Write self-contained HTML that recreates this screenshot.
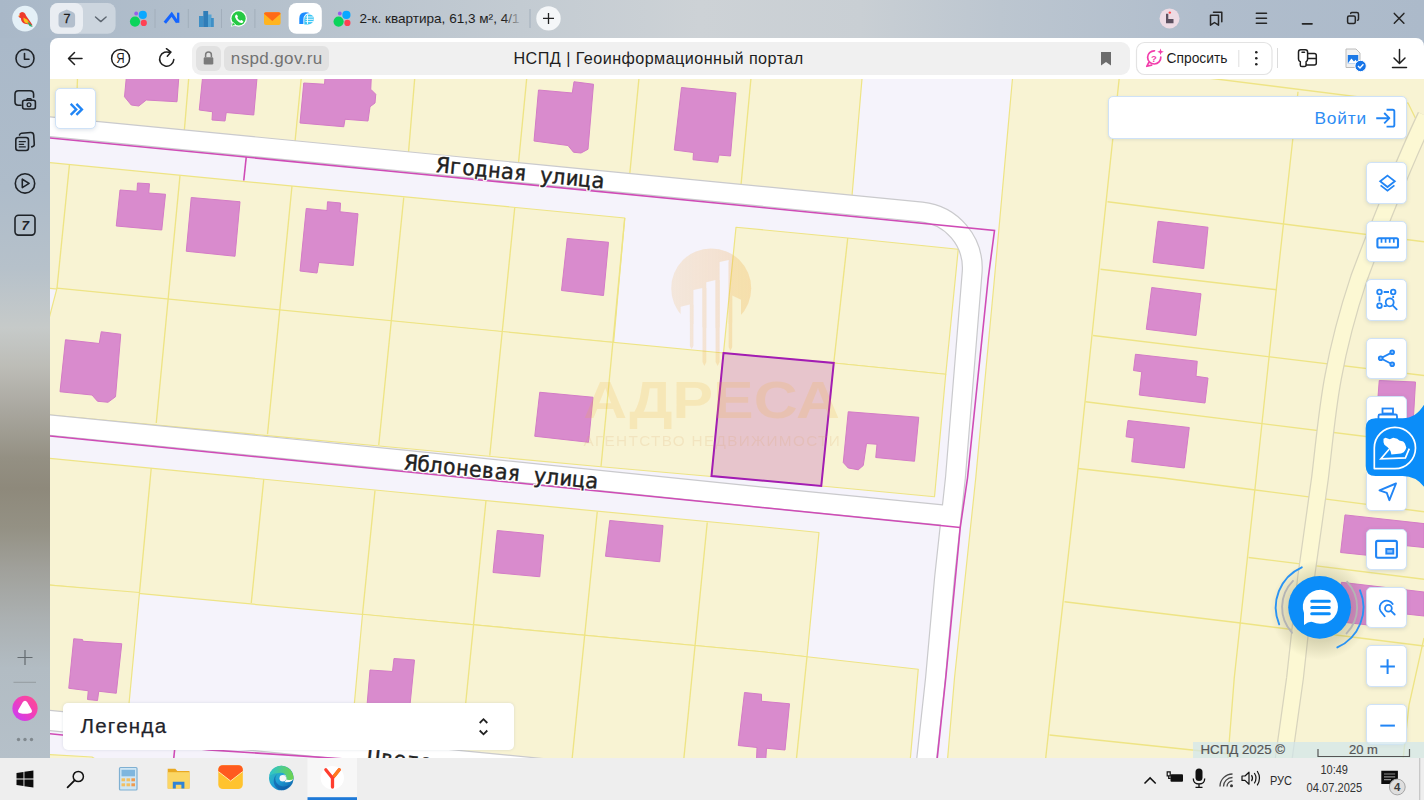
<!DOCTYPE html>
<html lang="ru">
<head>
<meta charset="utf-8">
<title>НСПД | Геоинформационный портал</title>
<style>
*{box-sizing:border-box;margin:0;padding:0}
html,body{width:1424px;height:800px;overflow:hidden}
body{position:relative;font-family:"Liberation Sans",sans-serif;background:#b3bfcb;color:#222}
.abs{position:absolute}
#frame{left:0;top:0;width:1424px;height:758px;
 background:
  linear-gradient(90deg,#a9b8c8 0,#b4c0cc 250px,#c3cbd2 520px,#cdd2d6 700px,#c9cfd4 860px,#bcc6d0 1000px,#b0bdcc 1200px,#acbaca 1424px);}
#side{left:0;top:38px;width:50px;height:720px;
 background:linear-gradient(180deg,#aab9c9 0,#aebcca 150px,#b6c1ca 230px,#c6cac9 290px,#bcbcb6 330px,#aaa8a0 370px,#949083 420px,#8e897b 450px,#949184 490px,#a0a09a 530px,#abb0b1 580px,#b2bcc3 630px,#b5c0c9 720px);}
#toolbar{left:50px;top:38px;width:1374px;height:41px;background:#fff;border-radius:8px 8px 0 0}
#omni{left:192px;top:42px;width:938px;height:33px;background:#f0f0f0;border-radius:9px}
.pill{top:46px;height:25px;background:#e1e1e1;border-radius:6px}
#title{left:192px;top:42px;width:938px;height:33px;line-height:33px;font-size:16.200px;color:#1d1d1d;text-align:center;padding-left:0;letter-spacing:.43px}
#title span{position:absolute;left:321.500px;top:0;white-space:nowrap}
#map{left:50px;top:79px;width:1374px;height:679px;overflow:hidden;background:#f8f3d3}
.mapsvg{position:absolute;left:0;top:-1px}
.btn{position:absolute;left:1315.5px;width:41.5px;height:41.5px;background:#fff;border:1px solid #cfe2f7;border-radius:5px;box-shadow:0 1px 4px rgba(60,90,130,.18)}
.btn svg{position:absolute;left:0;top:0}
#login{left:1057.5px;top:17px;width:299.5px;height:42.800px;background:#fff;border:1px solid #cfe2f7;border-radius:5px;box-shadow:0 1px 3px rgba(60,90,130,.12)}
#login span{position:absolute;left:206px;top:10.500px;font-size:17.300px;color:#2d8cf3;letter-spacing:.8px}
#legend{left:13px;top:623.5px;width:451px;height:47px;background:#fff;border-radius:5px;box-shadow:0 0 3px rgba(90,110,140,.18)}
#legend span{position:absolute;left:17.400px;top:11px;font-size:20.500px;line-height:23px;color:#1f232b;letter-spacing:1.300px;-webkit-text-stroke:.25px #1f232b}
#attr{left:1142.5px;top:662.5px;width:232px;height:17px;background:rgba(208,230,237,.7)}
#attr span{position:absolute;top:.5px;font-size:13.300px;color:#555;white-space:nowrap;-webkit-text-stroke:.2px #555}
#taskbar{left:0;top:758px;width:1424px;height:42px;background:#eeeeee}
.tb{position:absolute;font-size:12px;color:#111;white-space:nowrap}
</style>
</head>
<body>
<div id="frame" class="abs"></div>
<div id="side" class="abs"></div>

<!-- ======= tab strip ======= -->
<svg class="abs" style="left:0;top:0" width="1424" height="38" viewBox="0 0 1424 38">
  <!-- profile avatar -->
  <circle cx="25" cy="18.6" r="12.8" fill="#e4f0f7"/>
  <path d="M19.5,13.5 q2,-2.6 4.4,-.9 q1.5,1 2.2,3.2 l4.6,6.4 l2,3.2 l-3.6,-.9 l-4.2,-.7 q-3.8,-1.2 -4,-5.6 q-1.6,-.6 -2.6,-1.8 q.5,-.4 1.200,-.5z" fill="#ee3a2c"/>
  <path d="M23.500,17.500 l3.800,2.200 l2.800,4.200 l-4.400,-.9 q-2.600,-1.800 -2.200,-5.500z" fill="#f6c21c"/>
  <path d="M27.300,21.600 l3.400,2.300 l2,3 l-3.200,-.8z" fill="#2aa86a"/>
  <path d="M18.300,15.300 l1.500,-.2 l-.3,1.300z" fill="#f5b21a"/>
  <!-- tab group pill -->
  <rect x="50" y="3" width="65.600" height="30.800" rx="8" fill="#ccd5de"/>
  <rect x="50" y="3" width="33" height="30.800" rx="8" fill="#e9edf2"/>
  <path d="M61.500,11.800 l5.300,-2.400 l5.300,2.400 q3,1.200 3,4 v8.200 q0,3.400 -3.400,3.400 h-9.800 q-3.400,0 -3.400,-3.400 v-8.200 q0,-2.800 3,-4z" fill="#b3bfcd"/>
  <text x="66.900" y="23.400" font-size="12.500" font-family="'Liberation Sans',sans-serif" fill="#1c1c1c" text-anchor="middle" stroke="#1c1c1c" stroke-width=".3">7</text>
  <path d="M95.500,17 l5.300,4.600 l5.300,-4.600" fill="none" stroke="#5d6670" stroke-width="1.400" stroke-linecap="round" stroke-linejoin="round"/>
  <!-- avito -->
  <g>
    <circle cx="135" cy="21.600" r="5.100" fill="#0ad45a"/>
    <circle cx="142.800" cy="14.900" r="4.100" fill="#0aa8ff"/>
    <circle cx="143.800" cy="22.900" r="3.100" fill="#ff4053"/>
    <circle cx="136.200" cy="13.500" r="1.900" fill="#965eeb"/>
  </g>
  <g stroke="#a2aebb" stroke-width="1">
    <line x1="155" y1="9" x2="155" y2="28"/>
    <line x1="188.300" y1="9" x2="188.300" y2="28"/>
    <line x1="221.500" y1="9" x2="221.500" y2="28"/>
    <line x1="254.900" y1="9" x2="254.900" y2="28"/>
    <line x1="530" y1="9" x2="530" y2="28"/>
  </g>
  <!-- blue N -->
  <path d="M164.800,22.800 L171.700,14.300 L177.300,22.300" fill="none" stroke="#1565ff" stroke-width="3.100" stroke-linejoin="miter"/><path d="M178.200,12.700 V22.800" stroke="#1565ff" stroke-width="2.300"/>
  <!-- buildings -->
  <g fill="#3f8fc6">
    <rect x="199" y="16" width="4.500" height="11"/>
    <rect x="203.300" y="11" width="4.800" height="16" fill="#2f7db8"/>
    <rect x="208" y="14.500" width="3.500" height="12.500" fill="#56a4d4"/>
    <rect x="211" y="18" width="2.800" height="9"/>
  </g>
  <!-- whatsapp -->
  <circle cx="238.600" cy="18.400" r="8.300" fill="#fff"/>
  <circle cx="238.600" cy="18.400" r="7.100" fill="#26c943"/>
  <path d="M231.300,26.400 l1.400,-4.400 l3,2.900z" fill="#26c943" stroke="#fff" stroke-width=".8"/>
  <path d="M235.600,15 q.9,-1.200 1.700,.2 l.6,1.300 q.2,.6 -.6,1.200 q.9,2 3,3 q.7,-.9 1.300,-.6 l1.400,.8 q.9,.6 -.2,1.600 q-1.400,1.100 -3.700,-.2 q-2.900,-1.700 -3.900,-4.700 q-.5,-1.500 .4,-2.600z" fill="#fff"/>
  <!-- mail -->
  <rect x="264" y="12.300" width="16.600" height="12.800" rx="2" fill="#ffb41f"/>
  <path d="M264,13.800 q0,-1.500 1.800,-1.500 h13 q1.800,0 1.800,1.500 l-8.300,7.200z" fill="#ff6a17"/>
  <!-- active tab -->
  <rect x="288.600" y="3" width="33.200" height="30.800" rx="8" fill="#fff"/>
  <path d="M299.300,24 v-5.500 q0,-6.300 6.300,-6.300 q2.800,0 4.400,1.200 q-2.800,-.4 -4.600,1.200 q-2,1.800 -2,5.200 v4.200z" fill="#1a8cff"/>
  <path d="M304.300,24.400 v-5 q0,-5 4.800,-5 q3.600,0 4.500,3.100 q.8,3.300 -1.600,5.500 q-1.600,1.400 -4,1.400z" fill="#39c5f5"/>
  <g stroke="#fff" stroke-width=".9"><line x1="305.500" y1="17" x2="313" y2="17"/><line x1="305.500" y1="19.300" x2="313.500" y2="19.300"/><line x1="305.500" y1="21.600" x2="313" y2="21.600"/><line x1="307.500" y1="14.500" x2="307.500" y2="24"/></g>
  <g transform="translate(203.600,0)">
    <circle cx="135" cy="21.600" r="5.100" fill="#0ad45a"/>
    <circle cx="142.800" cy="14.900" r="4.100" fill="#0aa8ff"/>
    <circle cx="143.800" cy="22.900" r="3.100" fill="#ff4053"/>
    <circle cx="136.200" cy="13.500" r="1.900" fill="#965eeb"/>
  </g>
  <defs><linearGradient id="fade" x1="0" x2="1" y1="0" y2="0"><stop offset="0" stop-color="#1b1b1b"/><stop offset=".9" stop-color="#1b1b1b"/><stop offset="1" stop-color="#1b1b1b" stop-opacity=".15"/></linearGradient></defs>
  <text x="359.500" y="23" font-size="13" font-family="'Liberation Sans',sans-serif" fill="url(#fade)" textLength="160" lengthAdjust="spacingAndGlyphs">2-к. квартира, 61,3 м², 4/1</text>
  <circle cx="548.500" cy="18.400" r="12.200" fill="#f4f6f8"/>
  <path d="M543,18.400 h11 M548.500,12.900 v11" stroke="#222" stroke-width="1.300" fill="none"/>
  <!-- right window controls -->
  <circle cx="1169.500" cy="18.400" r="10" fill="#eddbe4"/>
  <path d="M1166,13.800 h2.300 v5.200 h5.200 v4.300 h-7.500z" fill="#5c5060"/>
  <circle cx="1169.800" cy="12.600" r="1.200" fill="#ff4a4a"/>
  <g fill="none" stroke="#252525" stroke-width="1.500" stroke-linejoin="round" stroke-linecap="round">
    <path d="M1210.500,15.200 h8 v10 l-4,-2.700 l-4,2.700z"/>
    <path d="M1213.500,12.200 h8.300 v9.500"/>
    <path d="M1256.300,13.300 h10.200 M1256.300,18.300 h10.200 M1256.300,23.300 h10.200" stroke-width="1.500"/>
    <path d="M1302.500,23.800 h9.500" stroke-width="1.700"/>
    <rect x="1347.600" y="16" width="7.700" height="7.600" rx="1.500"/>
    <path d="M1350.700,13.400 q0,-1 1,-1 h5.200 q1.600,0 1.600,1.600 v5.200 q0,1 -1,1"/>
    <path d="M1394.300,13.400 l9.600,9.800 M1403.900,13.400 l-9.600,9.800" stroke-width="1.500"/>
  </g>
</svg>

<!-- ======= left side icons ======= -->
<svg class="abs" style="left:0;top:38px" width="50" height="720" viewBox="0 38 50 720">
  <g fill="none" stroke="#1f2328" stroke-width="1.600" stroke-linecap="round" stroke-linejoin="round">
    <circle cx="25" cy="58.400" r="9"/>
    <path d="M24.500,53.500 v5.700 h4.500"/>
    <!-- screenshot -->
    <path d="M21,105.200 h-2.500 q-3.500,0 -3.500,-3.500 v-7.400 q0,-3.600 3.500,-3.600 h11.500 q3.600,0 3.600,3.600 v3"/>
    <rect x="22.600" y="100.300" width="12.800" height="8.700" rx="2"/>
    <path d="M26.500,100.300 l1,-1.600 h3.200 l1,1.600"/>
    <circle cx="29" cy="104.700" r="1.900" stroke-width="1.300"/>
    <!-- notes -->
    <rect x="15.800" y="137.500" width="12.700" height="13" rx="2.500"/>
    <path d="M19.500,135 q.5,-1.500 2,-1.700 l9,-.8 q3,-.2 3.200,2.600 l.6,9.500 q0,1.700 -2.500,2.300"/>
    <path d="M19.300,141.700 h6 M19.300,144.300 h4.300 M19.300,146.900 h6" stroke-width="1.300"/>
    <!-- play -->
    <circle cx="25" cy="183.400" r="9.700"/>
    <path d="M22.300,179.200 v8.400 l6.800,-4.200z"/>
    <!-- 7 -->
    <rect x="15" y="215.300" width="20" height="19.800" rx="3.500"/>
  </g>
  <text x="25.200" y="230.300" font-size="13.500" font-weight="bold" font-style="italic" font-family="'Liberation Sans',sans-serif" fill="#1f2328" text-anchor="middle">7</text>
  <path d="M17.500,657.500 h15 M25,650 v15" stroke="#646b70" stroke-width="1.200" fill="none"/>
  <path d="M13.500,682.300 h22.500" stroke="#949ca1" stroke-width="1"/>
  <defs><linearGradient id="alice" x1="0" x2="1" y1="1" y2="0"><stop offset="0" stop-color="#c33dff"/><stop offset=".55" stop-color="#f23fb8"/><stop offset="1" stop-color="#ff4f8b"/></linearGradient></defs>
  <circle cx="25" cy="708.300" r="12.600" fill="url(#alice)"/>
  <path d="M25,700.700 q1.400,0 2.300,1.600 l4.300,7.400 q1.300,2.800 -1.800,3.600 q-4.800,1.100 -9.600,0 q-3.100,-.8 -1.800,-3.600 l4.300,-7.400 q.9,-1.600 2.300,-1.600z" fill="#fff"/>
  <g fill="#80888e"><circle cx="18.500" cy="739.500" r="1.700"/><circle cx="25" cy="739.500" r="1.700"/><circle cx="31.500" cy="739.500" r="1.700"/></g>
</svg>

<!-- ======= toolbar ======= -->
<div id="toolbar" class="abs"></div>
<div id="omni" class="abs"></div>
<div class="abs pill" style="left:196px;width:24.500px"></div>
<div class="abs pill" style="left:223.600px;width:105.700px"></div>
<div id="title" class="abs"><span>НСПД | Геоинформационный портал</span></div>
<div class="abs" style="left:230.800px;top:47.500px;font-size:17px;color:#727272;line-height:22px;letter-spacing:.38px">nspd.gov.ru</div>
<svg class="abs" style="left:50px;top:38px" width="1374" height="41" viewBox="50 38 1374 41">
  <g fill="none" stroke="#1f1f1f" stroke-width="1.500" stroke-linecap="round" stroke-linejoin="round">
    <path d="M82,58.500 h-13.300 M74.500,52.500 l-6,6 l6,6"/>
    <circle cx="120.600" cy="58.400" r="9"/>
    <path d="M173.800,59.600 A7.100,7.100 0 1 1 170.300,52.900 M166.400,48.700 L171,52.100 L167.300,56.200"/>
  </g>
  <text transform="translate(120.500,63.400) scale(.84,1)" font-size="13.800" font-family="'Liberation Sans',sans-serif" fill="#1f1f1f" text-anchor="middle">Я</text>
  <!-- lock -->
  <rect x="203.700" y="57.200" width="9.600" height="7.400" rx="1.300" fill="#7a7a7a"/>
  <path d="M205.600,57.200 v-2.200 a2.900,2.900 0 0 1 5.800,0 v2.200" fill="none" stroke="#7a7a7a" stroke-width="1.500"/>
  <!-- bookmark -->
  <path d="M1101,52 h10 v13.500 l-5,-3.500 l-5,3.500z" fill="#6c6c6c"/>
  <!-- ask button -->
  <rect x="1136.500" y="42.500" width="135.500" height="32" rx="8" fill="#fff" stroke="#e3e3e3" stroke-width="1.200"/>
  <path d="M1154.500,50.800 a6.600,6.600 0 1 0 6.300,6.200 M1148.800,62.500 l-2,3.800 l4.800,-1.200" fill="none" stroke="#f23dab" stroke-width="1.700" stroke-linecap="round" stroke-linejoin="round"/>
  <text x="1153.800" y="61.800" font-size="9.500" font-weight="bold" font-family="'Liberation Sans',sans-serif" fill="#f23dab" text-anchor="middle">?</text>
  <path d="M1160.500,48.500 l.9,2.400 l2.400,.9 l-2.400,.9 l-.9,2.400 l-.9,-2.400 l-2.400,-.9 l2.400,-.9z" fill="#f23dab"/>
  <text x="1166.500" y="62.800" font-size="14" font-family="'Liberation Sans',sans-serif" fill="#1c1c1c" textLength="61" lengthAdjust="spacingAndGlyphs">Спросить</text>
  <path d="M1238.800,50 v17" stroke="#dedede" stroke-width="1"/>
  <g fill="#222"><circle cx="1256.300" cy="52.300" r="1.300"/><circle cx="1256.300" cy="58.300" r="1.300"/><circle cx="1256.300" cy="64.300" r="1.300"/></g>
  <path d="M1277.500,48 v20" stroke="#dcdcdc" stroke-width="1"/>
  <!-- paint/brush icon -->
  <g fill="none" stroke="#1f1f1f" stroke-width="1.500" stroke-linejoin="round" stroke-linecap="round">
    <path d="M1298.500,52 q0,-2.300 2.300,-2.300 h4.500 q2.300,0 2.300,2.300 v7 q0,2.200 -1.500,2.800 v3.200 q0,1.600 -1.600,1.600 h-2.600 q-1.600,0 -1.600,-1.600 v-3.200 q-1.800,-.6 -1.800,-2.800z"/>
    <path d="M1302,52.300 h2.500"/>
    <path d="M1307.800,53.500 h6.500 q2,0 2,2 v7.500 q0,2 -2,2 h-8"/>
    <path d="M1307.800,58.500 h8.500"/>
  </g>
  <!-- picture with check -->
  <path d="M1346,49 h10 l4,4 v14.500 h-14z" fill="#f1f1f1" stroke="#bdbdbd" stroke-width="1"/>
  <rect x="1347.800" y="55" width="10.400" height="8.500" fill="#1b78e6"/>
  <path d="M1347.800,63.500 l3.600,-5 l2.600,3 l1.600,-1.700 l2.600,3.700z" fill="#fff"/>
  <circle cx="1360.600" cy="66" r="5.700" fill="#1674e8" stroke="#fff" stroke-width="1"/>
  <path d="M1358,66 l2,2 l3.400,-3.700" stroke="#fff" stroke-width="1.400" fill="none"/>
  <!-- download -->
  <path d="M1399.500,49.500 v13.500 M1394,58 l5.500,5.500 l5.500,-5.500 M1392.500,67.500 h14" fill="none" stroke="#1f1f1f" stroke-width="1.500" stroke-linecap="round" stroke-linejoin="round"/>
</svg>

<!-- ======= map ======= -->
<div id="map" class="abs">
<svg class="mapsvg" width="1374" height="680" viewBox="50 78 1374 680">
<rect x="50" y="78" width="1374" height="680" fill="#f5f3fb"/>
<g fill="#f8f3d3" stroke="#eee485" stroke-width="1.2" stroke-linejoin="round">
<polygon points="40,70 862.75,70 852,196 762,187.5 406,152.5 40,119"/>
<polygon points="40,161.75 624.75,218 613.6,342.5 40,287.5"/>
<polygon points="57,288.2 723.5,353 711.5,476.5 601,466.75 406,448.5 40,414.25 40,353"/>
<polygon points="736,227.25 847.75,238 958.25,249.25 945.75,374.25 833.75,363 723.5,353"/>
<polygon points="723.5,353 833.75,363 821.25,486 711.5,476"/>
<polygon points="833.75,363 945.75,374.25 934.5,496.75 821.25,486"/>
<polygon points="40,457.5 406,493 762,526.75 819,532.5 807,656.75 762,651.75 406,618.5 40,584.25"/>
<polygon points="40,584.25 139.5,592.5 127.6,718.6 40,711"/>
<polygon points="40,754 92,757 110,768 40,768"/>
<polygon points="362.5,614.25 406,618.5 762,651.75 807,656.75 918.25,669.25 909.5,768 348.5,768"/>
<polygon points="1013.25,70 1434,70 1434,768 946.8,768 954.5,678 975.75,478 994.5,278"/>
</g>
<g fill="none" stroke="#eee485" stroke-width="1.35">
<polyline points="77.5,78 76,121"/>
<polyline points="188.75,78 184.25,131.5"/>
<polyline points="301.25,78 295,142"/>
<polyline points="414.75,78 408.5,152.5"/>
<polyline points="526.75,78 518.5,163"/>
<polyline points="639,78 629.75,174"/>
<polyline points="751,78 741,185"/>
<polyline points="69.5,164.25 57,288.2"/>
<polyline points="180,175.5 156.25,423"/>
<polyline points="292,186 267.5,434.25"/>
<polyline points="403.75,197.5 378.75,445"/>
<polyline points="514.75,207.5 489.75,455.5"/>
<polyline points="624.75,218 601,466.75"/>
<polyline points="847.75,238 833.75,363"/>
<polyline points="151.25,468 139.5,592.5"/>
<polyline points="263.75,479.25 251.25,603"/>
<polyline points="375,490.5 362.5,614.25"/>
<polyline points="486,500.5 460,760"/>
<polyline points="597.25,511.75 572,760"/>
<polyline points="707.25,522.5 683.7,760"/>
<polyline points="807,656.75 796.3,760"/>
<polyline points="1119.25,78 1098,278 1077,478 1054.5,678 1045.5,760"/>
<polyline points="1298,91.75 1277.5,278 1255.5,484 1234.25,678 1227.8,760"/>
<polyline points="1107.5,201.75 1424,241.75"/>
<polyline points="1100.5,269.25 1276.75,289.75"/>
<polyline points="1093,335.5 1424,375.5"/>
<polyline points="1085.5,401.75 1368,436.75 1424,443.7"/>
<polyline points="1078,468.5 1163,478 1255.5,490 1424,511.75"/>
<polyline points="1248.5,557.5 1424,579.25"/>
<polyline points="1064.5,601.75 1240.5,623 1424,646"/>
<polyline points="1049.5,735 1228,753.75"/>
<polyline points="1208,78 1408,103 1424,135.5"/>
<polyline points="1424,638 1409,705 1403,760"/>
</g>
<path d="M1426,116 C1405,160 1375,235 1359,278 C1345,320 1338,350 1333,378 C1327,410 1324,445 1320,478 L1306,578 L1295,678 L1283.5,760" fill="none" stroke="#d8d4bd" stroke-width="18"/>
<path d="M1426,116 C1405,160 1375,235 1359,278 C1345,320 1338,350 1333,378 C1327,410 1324,445 1320,478 L1306,578 L1295,678 L1283.5,760" fill="none" stroke="#fcf8d3" stroke-width="15.5"/>
<g fill="none" stroke-linejoin="round">
<path d="M40,125.8 L921.6,211.9 A56.5,56.5 0 0 1 972.2,271.5 L955.4,478 L944.5,578 L935.5,678 L926,765" stroke="#cacacd" stroke-width="21.0"/>
<path d="M40,424.1 L406,460.5 L762,497.25 L952,516" stroke="#cacacd" stroke-width="21.4"/>
<path d="M40,719.6 L560,770.4" stroke="#cacacd" stroke-width="21.4"/>
<path d="M40,125.8 L921.6,211.9 A56.5,56.5 0 0 1 972.2,271.5 L955.4,478 L944.5,578 L935.5,678 L926,765" stroke="#ffffff" stroke-width="18.6"/>
<path d="M40,424.1 L406,460.5 L762,497.25 L952,516" stroke="#ffffff" stroke-width="19"/>
<path d="M40,719.6 L560,770.4" stroke="#ffffff" stroke-width="19"/>
</g>
<g fill="#d98bcd" stroke="#d37cc6" stroke-width="1" stroke-linejoin="round">
<polygon points="126.25,78 178.75,78 177,101.75 146.25,100 138.75,106 131.25,105 124.5,96.75"/>
<polygon points="202.5,78 257,78 253.75,115 226.25,112.5 225,121 212,120 212.5,111.75 199.25,110"/>
<polygon points="325,78 371.25,78 370.75,89.25 375.75,94.25 375,103 370,106.75 368,121 345,119.25 343.75,126.75 300,123 303.75,83 324.5,84.25"/>
<polygon points="137.5,183 149.5,183.75 148.75,193 165.5,194.25 161.75,230 116.25,226 120,190 137,191.25"/>
<polygon points="191.25,197.5 240,201.75 235,256.25 186.25,251.25"/>
<polygon points="327.5,201.75 340.5,203 340,211.75 358,213.75 353.25,265.5 318.75,262.5 317,273 300,271 306.25,208.5 327,210.5"/>
<polygon points="574,81.75 593.5,84.25 588,149.25 581,153 573.5,152.25 568,145.5 534,141 538.5,90 572.25,93"/>
<polygon points="681.5,87.5 736,93 730.5,156 719,155 717.75,162.25 693,159.75 693.5,152.5 674.25,150"/>
<polygon points="567.25,238.5 608.5,242.25 603.5,295.5 561.5,290.5"/>
<polygon points="101.25,331.75 120.75,334.25 115.5,396.75 108,402.25 97.5,401.25 92,395 60,391.75 65.5,339.75 99.25,343.5"/>
<polygon points="539.75,392.25 593,397.25 588.5,442.25 534.75,436.25"/>
<polygon points="848.25,411.75 918.75,417.25 914.5,461.25 875.75,457.5 877,444.25 866.5,443.5 863.25,465.5 858.25,469.75 848.25,468 843.25,462.5"/>
<polygon points="1158,221.25 1208,227.25 1203.75,268.5 1153,262.25"/>
<polygon points="1151.75,287.5 1201,293.75 1196,335.5 1146.25,329.25"/>
<polygon points="1135.5,354.25 1197.25,361.25 1196,376.25 1208,378 1205,403 1139.25,395 1141.75,371.75 1133.5,370.5"/>
<polygon points="1128,420.5 1189.25,427.5 1184.25,468 1131.75,461.75 1134.25,438 1126,436.75"/>
<polygon points="1379.25,380.5 1415.5,382 1413,425 1376,423"/>
<polygon points="1345,514.9 1424,523.6 1424,547.5 1390,544 1389,557.5 1340.6,552.5"/>
<polygon points="1341.5,582.3 1424,592 1424,616 1392,612.5 1390.8,627.5 1337,621.5"/>
<polygon points="73.75,638.75 82.5,639.5 83,641.25 121.75,643.75 116.25,693.25 98.75,691.25 97.5,700.5 87.5,699.5 88.25,690.75 68.75,688.25"/>
<polygon points="370,670 392.5,671.5 394,658.5 414.5,660 406,745 364,741"/>
<polygon points="497.25,530.5 543.5,535 539.75,576.75 493,572.5"/>
<polygon points="609.75,520.5 663,525.5 659.75,561.75 605.5,556.25"/>
<polygon points="744.5,692.5 761.5,694.25 761.5,701.25 789.5,703.75 785,750 766.5,748.25 765.75,760 756.5,760 757,747.5 738.25,745.5"/>
</g>
<g fill="none" stroke="#cf4bb6" stroke-width="1.6" stroke-linejoin="miter">
<polyline points="40,137 406,172.7 762,207.5 994.5,230.5 988.25,278 967.5,478 960.25,527.5 945.75,678 936.5,765"/>
<polyline points="40,435 406,471.75 960.25,527.5"/>
<polyline points="246.25,157 243.75,180.5"/>
<polyline points="40,732.8 175,746.3 208.5,749.9 320.3,757.3 345,759"/>
<polyline points="175,746 173.6,760"/>
</g>
<polygon points="723.5,353 833.75,363 821.25,486 711.5,476" fill="rgba(210,140,195,0.44)" stroke="#a21cb4" stroke-width="2"/>
<defs><mask id="lgm" maskUnits="userSpaceOnUse" x="660" y="240" width="100" height="135">
<circle cx="711.2" cy="288.4" r="40" fill="#fff"/>
<g fill="#000">
<path d="M680.6,306.7 L689.9,304.5 V340 H680.6Z"/>
<path d="M693.4,290.1 L702.5,288 V340 H693.4Z"/>
<path d="M706.3,282.2 L715.6,280 V340 H706.3Z"/>
<path d="M719.6,262.1 L728.7,260 V340 H719.6Z"/>
<path d="M732.2,295.4 L741,299.7 V340 H732.2Z"/>
</g>
<g fill="#fff">
<path d="M689.9,304.5 H693.4 V346 L691.6,349 L689.9,346Z"/>
<path d="M702.5,288 H706.3 V362 L704.4,366 L702.5,362Z"/>
<path d="M715.6,280 H719.6 V362 L717.6,366 L715.6,362Z"/>
<path d="M728.7,262 H732.2 V347 L730.4,351 L728.7,347Z"/>
</g></mask>
<linearGradient id="lgg" x1="0" x2="1" y1="0" y2="0"><stop offset="0" stop-color="#f0a53a" stop-opacity="0.15"/><stop offset="1" stop-color="#f0a53a" stop-opacity="0.26"/></linearGradient></defs>
<rect x="665" y="245" width="92" height="125" fill="url(#lgg)" mask="url(#lgm)"/>
<g opacity="0.17">
<text x="583.2" y="418" font-family="'Liberation Sans',sans-serif" font-weight="bold" font-size="51" fill="#f0ae34" textLength="256.7" lengthAdjust="spacingAndGlyphs">АДРЕСА</text>
<text x="583.4" y="446.2" font-family="'Liberation Sans',sans-serif" font-size="15.3" fill="#d9a060" textLength="256.3" lengthAdjust="spacing">АГЕНТСТВО НЕДВИЖИМОСТИ</text>
</g>
<g transform="translate(435.5,172) rotate(5.6)">
<text font-family="'DejaVu Sans Mono','Liberation Mono',monospace" font-size="21.6" fill="#ffffff" stroke="#ffffff" stroke-width="3" stroke-linejoin="round" opacity="0.9">Ягодная улица</text>
<text font-family="'DejaVu Sans Mono','Liberation Mono',monospace" font-size="21.6" fill="#222" stroke="#222" stroke-width="0.35">Ягодная улица</text>
</g>
<g transform="translate(403.5,469.5) rotate(5.7)">
<text font-family="'DejaVu Sans Mono','Liberation Mono',monospace" font-size="21.6" fill="#ffffff" stroke="#ffffff" stroke-width="3" stroke-linejoin="round" opacity="0.9">Яблоневая улица</text>
<text font-family="'DejaVu Sans Mono','Liberation Mono',monospace" font-size="21.6" fill="#222" stroke="#222" stroke-width="0.35">Яблоневая улица</text>
</g>
<g transform="translate(367,763.5) rotate(5.7)">
<text font-family="'DejaVu Sans Mono','Liberation Mono',monospace" font-size="21.6" fill="#ffffff" stroke="#ffffff" stroke-width="3" stroke-linejoin="round" opacity="0.9">Цветочная улица</text>
<text font-family="'DejaVu Sans Mono','Liberation Mono',monospace" font-size="21.6" fill="#222" stroke="#222" stroke-width="0.35">Цветочная улица</text>
</g>
</svg>
  <!-- » button -->
  <div class="btn" style="left:4.800px;top:9px;width:41px;height:41px">
    <svg width="41" height="41" viewBox="0 0 41 41"><path d="M14.700,14.900 l5.500,5.500 l-5.500,5.500 M20.400,14.900 l5.500,5.500 l-5.500,5.500" fill="none" stroke="#2185f5" stroke-width="2.400" stroke-linejoin="miter"/></svg>
  </div>
  <!-- login -->
  <div id="login" class="abs"><span>Войти</span>
    <svg class="abs" style="left:263px;top:8.500px" width="26.300" height="24.400" viewBox="0 0 28 26"><path d="M4.500,13 h13.500 M13,7.500 l5.500,5.500 l-5.500,5.500 M15.500,4 h6.500 q1.800,0 1.800,1.800 v14.400 q0,1.800 -1.800,1.800 h-6.500" fill="none" stroke="#2185f5" stroke-width="2" stroke-linejoin="round" stroke-linecap="butt"/></svg>
  </div>
  <!-- right buttons -->
  <div class="btn" style="top:83.4px"><svg width="41" height="41" viewBox="0 0 41 41"><path d="M20.500,12.600 l7.300,5.700 l-7.300,5.700 l-7.300,-5.700z M13.600,22.400 l6.900,5.300 l6.900,-5.300" fill="none" stroke="#2185f5" stroke-width="1.800" stroke-linejoin="miter"/></svg></div>
  <div class="btn" style="top:141.9px"><svg width="41" height="41" viewBox="0 0 41 41"><rect x="10.400" y="16.300" width="20.600" height="9.200" rx="1.600" fill="none" stroke="#2185f5" stroke-width="2.100"/><path d="M14.500,16.500 v4.300 M18.600,16.500 v4.300 M22.700,16.500 v4.300 M26.800,16.500 v4.300" stroke="#2185f5" stroke-width="1.700"/></svg></div>
  <div class="btn" style="top:200.4px"><svg width="41" height="41" viewBox="0 0 41 41"><g fill="none" stroke="#2185f5" stroke-width="1.800" transform="translate(-.8,-1.300)"><circle cx="13.300" cy="13.300" r="2.300"/><circle cx="27" cy="13.300" r="2.300"/><circle cx="13.300" cy="27" r="2.300"/><path d="M17.500,13.300 h5.300 M13.300,17.500 v5.300 M17.500,27.500 h3 M27,17.300 v2"/><circle cx="23.500" cy="23.600" r="4"/><path d="M26.500,26.600 l4.500,4.500"/></g></svg></div>
  <div class="btn" style="top:258.6px"><svg width="41" height="41" viewBox="0 0 41 41"><g fill="none" stroke="#2185f5" stroke-width="1.800" transform="translate(-1.300,-1.200)"><path d="M26,14.800 l-11,5.700 l11,5.700"/><circle cx="26.500" cy="14.500" r="1.900" fill="#8dc0fa"/><circle cx="15" cy="20.500" r="1.900" fill="#8dc0fa"/><circle cx="26.500" cy="26.500" r="1.900" fill="#8dc0fa"/></g></svg></div>
  <div class="btn" style="top:316.9px"><svg width="41" height="41" viewBox="0 0 41 41"><g fill="none" stroke="#2185f5" stroke-width="1.800"><rect x="15.500" y="11.500" width="10.500" height="5"/><rect x="11.500" y="17.500" width="18.500" height="10" rx="1.500"/></g></svg></div>
  <div class="btn" style="top:390.9px"><svg width="41" height="41" viewBox="0 0 41 41"><path d="M29,12.500 l-16.500,6.800 l7.300,2.600 l2.600,7.300z" fill="none" stroke="#2185f5" stroke-width="1.900" stroke-linejoin="round"/></svg></div>
  <div class="btn" style="top:449.9px"><svg width="41" height="41" viewBox="0 0 41 41"><g transform="translate(-1.200,-1.400)"><rect x="10.300" y="12.300" width="20.800" height="16.800" rx="1.600" fill="none" stroke="#2185f5" stroke-width="2.100"/><rect x="20.500" y="20.400" width="7" height="4.600" fill="#8dc0fa" stroke="#2185f5" stroke-width="1.900"/></g></svg></div>
  <div class="btn" style="top:507.9px"><svg width="41" height="41" viewBox="0 0 41 41"><g fill="none" stroke="#2185f5" stroke-width="1.800" stroke-linecap="round" transform="translate(-.8,-1)"><path d="M26.500,17 a7,7 0 1 0 -12,7.300 l4,5"/><circle cx="22.200" cy="21.200" r="3.400"/><path d="M24.800,23.800 l3.700,3.700"/></g></svg></div>
  <div class="btn" style="top:566.1px"><svg width="41" height="41" viewBox="0 0 41 41"><path d="M13.300,20.600 h14.600 M20.600,13.300 v14.600" stroke="#2185f5" stroke-width="2" fill="none"/></svg></div>
  <div class="btn" style="top:624.9px"><svg width="41" height="41" viewBox="0 0 41 41"><path d="M13.300,20.600 h14.600" stroke="#2185f5" stroke-width="2" fill="none"/></svg></div>

  <!-- blue widget -->
  <svg class="abs" style="left:1300px;top:320px" width="74" height="100" viewBox="1350 399 74 100">
    <path d="M1375.700,418.200 h27 q13,0 21.300,-13.500 v82 q-8.300,-10.700 -21.300,-10.700 h-27 q-10,0 -10,-10 v-37.800 q0,-10 10,-10z" fill="#0b8df9"/>
    <path d="M1374.300,468.600 V448 A20.600,20.600 0 1 1 1394.900,468.600 Z" fill="none" stroke="#fff" stroke-width="1.700" stroke-linejoin="round"/>
    <path d="M1383.500,438.700 L1385.600,437.800 L1389.700,439.200 L1393.200,437.800 L1397.200,438.700 L1399.300,440.400 L1403.200,441.600 L1404.900,443.400 L1406.300,447.400 L1405.400,450 L1403.700,452.200 L1401,453.600 L1391.400,454.400 L1390.500,450.900 L1387.900,447.400 L1384.400,444.800 L1383.500,442.200Z" fill="#fff"/>
    <path d="M1389.100,449.200 L1380.900,458.800 L1405.400,457.900 L1409.300,448.700" fill="none" stroke="#fff" stroke-width="1.700" stroke-linejoin="miter"/>
  </svg>

  <!-- chat button -->
  <svg class="abs" style="left:1210px;top:468px" width="120" height="120" viewBox="1260 547 120 120">
    <defs><radialGradient id="sh"><stop offset=".62" stop-color="#5a5a30" stop-opacity=".2"/><stop offset="1" stop-color="#5a5a30" stop-opacity="0"/></radialGradient></defs>
    <circle cx="1320" cy="610" r="50" fill="url(#sh)"/>
    <circle cx="1319.600" cy="607.300" r="31.400" fill="#0b8df9"/>
    <g fill="none" stroke-width="1.900" stroke-linecap="round">
      <path d="M1279.200,624.300 A43.800,43.800 0 0 1 1301.800,567.300" stroke="#2a93f3"/>
      <path d="M1360,590.300 A43.800,43.800 0 0 1 1337.300,647.400" stroke="#2a93f3"/>
      <path d="M1292,632.700 A37.500,37.500 0 0 1 1293,580.900" stroke="#b4b4b4"/>
      <path d="M1347.200,581.800 A37.500,37.500 0 0 1 1346.500,633.400" stroke="#b4b4b4"/>
    </g>
    <path d="M1320.500,589.800 a17.600,17 0 1 1 -8,32.200 q-3.500,-.8 -8.500,3 v-12 a17.600,17 0 0 1 16.500,-23.200z" fill="#fff"/>
    <path d="M1311.700,601.300 h17.600 M1311.700,607.600 h17.600 M1311.700,613.800 h17.600" stroke="#0b8df9" stroke-width="3" stroke-linecap="round"/>
  </svg>

  <!-- legend -->
  <div id="legend" class="abs"><span>Легенда</span>
    <svg class="abs" style="left:410px;top:12px" width="20" height="24" viewBox="0 0 20 24"><path d="M6.700,8 l3.800,-3.800 l3.800,3.800 M6.700,15.500 l3.800,3.800 l3.800,-3.800" fill="none" stroke="#222" stroke-width="1.800"/></svg>
  </div>
  <!-- attribution -->
  <div id="attr" class="abs"><span style="left:8px">НСПД 2025 ©</span><span style="left:156.500px;font-size:13px">20 m</span>
    <svg class="abs" style="left:124px;top:7px" width="95" height="9" viewBox="0 0 95 9"><path d="M1,0 v7.500 h91.500 v-7.500" fill="none" stroke="#555" stroke-width="1.200"/></svg>
  </div>
</div>

<!-- ======= taskbar ======= -->
<div id="taskbar" class="abs">
  <svg class="abs" style="left:0;top:0" width="1424" height="42" viewBox="0 758 1424 42">
    <rect x="307.500" y="758" width="49.500" height="42" fill="#f7f7f7"/>
    <rect x="307.500" y="797.200" width="49.500" height="2.800" fill="#1f7ad8"/>
    <!-- windows logo -->
    <g fill="#0c0c0c"><path d="M16.500,773 l7,-1 v6.600 h-7z M24.400,771.800 l9,-1.300 v8.100 h-9z M16.500,779.500 h7 v6.600 l-7,-1z M24.400,779.500 h9 v8.100 l-9,-1.300z"/></g>
    <!-- search -->
    <circle cx="78.300" cy="776.500" r="5.100" fill="none" stroke="#111" stroke-width="1.500"/>
    <path d="M74.600,780.300 l-7,7" stroke="#111" stroke-width="1.800" stroke-linecap="round"/>
    <!-- calculator -->
    <rect x="119.500" y="767.500" width="17.500" height="22.500" rx="1" fill="#cfe6f4" stroke="#7fb0d2" stroke-width="1.200"/>
    <rect x="121.500" y="769.800" width="13.500" height="6.500" fill="#7fb6de"/>
    <g fill="#f2c063"><rect x="121.500" y="778.300" width="3.600" height="3"/><rect x="126.500" y="778.300" width="3.600" height="3"/><rect x="131.400" y="778.300" width="3.600" height="3" fill="#ee9b4f"/><rect x="121.500" y="783.300" width="3.600" height="3"/><rect x="126.500" y="783.300" width="3.600" height="3"/><rect x="131.400" y="783.300" width="3.600" height="3" fill="#ee9b4f"/></g>
    <!-- folder -->
    <path d="M167.700,768.700 h7.600 l2,2.300 h12.200 v17.500 h-21.800z" fill="#e9a922"/>
    <rect x="167.700" y="772.200" width="21.800" height="16.300" fill="#fbd664"/>
    <path d="M172.800,788.500 v-6.700 h11.600 v6.700 h-3 v-3.700 h-5.600 v3.700z" fill="#2f83d6"/>
    <!-- mail -->
    <rect x="218.300" y="765.300" width="24.500" height="23.700" rx="4.500" fill="#ffc32e"/>
    <path d="M218.300,770 q0,-4.700 4.500,-4.700 h15.500 q4.500,0 4.500,4.700 v1.500 l-12.200,9.500 l-12.300,-9.500z" fill="#ff5a1f"/>
    <path d="M218.300,771.500 l12.300,9.500 l12.200,-9.500" fill="none" stroke="#ffe9a8" stroke-width="1"/>
    <!-- edge -->
    <defs>
      <linearGradient id="eg1" x1="0" y1="0" x2="1" y2="1"><stop offset="0" stop-color="#36c4b0"/><stop offset=".5" stop-color="#1fa0d8"/><stop offset="1" stop-color="#0c59a4"/></linearGradient>
      <linearGradient id="eg2" x1="0" y1="0" x2="1" y2="0"><stop offset="0" stop-color="#2bc3d2"/><stop offset="1" stop-color="#6fd44a"/></linearGradient>
    </defs>
    <circle cx="281.300" cy="778" r="12.300" fill="url(#eg1)"/>
    <path d="M269.300,775.500 a12.300,12.300 0 0 1 24.200,1 q.3,4.500 -4.300,5.200 q-3.400,.3 -3.700,-1.500 q1,-1.200 .8,-3 q-.6,-4.200 -5.600,-4.400 q-6.700,0 -11.400,2.700z" fill="url(#eg2)"/>
    <path d="M280.700,772.800 q-5,.5 -5.400,5.700 q0,6 6.600,7.800 q4.300,.9 8.200,-1.800 q-2.500,4.800 -8.500,5.700 q-3.500,-.5 -5.600,-3 q-3.600,-4.400 -1.600,-9.700 q1.800,-4 6.300,-4.700z" fill="#0d4f9e" opacity=".55"/>
    <circle cx="282.800" cy="778.300" r="3.300" fill="#f7f7f7"/>
    <path d="M282.500,775 q4,-.2 4,3.300 q0,2 -2,3.600 q4,1 7.500,-1.200 l1,-2 q-1,1.700 -4.500,1.300 q-3,-.5 -2.500,-2.500 q1,-3.500 -3.500,-2.500z" fill="#f7f7f7"/>
    <!-- yandex -->
    <circle cx="332.300" cy="777.800" r="11.700" fill="#fff"/>
    <path d="M325.800,769.800 l6.700,8.300 l6.700,-8.300" fill="none" stroke="#ff3d2e" stroke-width="3.200" stroke-linecap="round" stroke-linejoin="round"/>
    <path d="M332.500,778 v9" stroke="#ff3d2e" stroke-width="3.300" stroke-linecap="round"/>
    <path d="M334.500,775.700 l4.700,-5.900" stroke="#ff7a1f" stroke-width="3.200" stroke-linecap="round"/>
    <!-- tray -->
    <path d="M1144.500,783.500 l5.600,-5.600 l5.600,5.600" fill="none" stroke="#111" stroke-width="1.500"/>
    <rect x="1170.500" y="774.300" width="12.500" height="7.400" rx="1" fill="#111"/>
    <path d="M1167.200,771.800 h3 v4 h-3z M1168.700,775.800 v2.500 h2" fill="none" stroke="#111" stroke-width="1.200"/>
    <rect x="1195.500" y="768.500" width="7" height="12.500" rx="3.500" fill="#111"/>
    <path d="M1193.300,778.500 q0,5.500 5.700,5.500 q5.700,0 5.700,-5.500 M1199,784 v3 M1195.500,787.300 h7" fill="none" stroke="#111" stroke-width="1.300"/>
    <g fill="none" stroke="#444" stroke-width="1.300"><path d="M1220,786.500 a12.500,12.500 0 0 1 12.500,-12.500"/><path d="M1223.500,786.500 a9,9 0 0 1 9,-9"/><path d="M1227,786.500 a5.500,5.500 0 0 1 5.500,-5.500"/></g>
    <circle cx="1231.500" cy="785.700" r="1.500" fill="#333"/>
    <path d="M1242,776 h3 l4,-3.800 v12 l-4,-3.800 h-3z" fill="none" stroke="#111" stroke-width="1.200" stroke-linejoin="round"/>
    <g fill="none" stroke="#111" stroke-width="1.200"><path d="M1251.500,775.200 q2,3 0,6"/><path d="M1254.300,773 q3.400,5.200 0,10.400"/><path d="M1257.200,771 q4.600,7.200 0,14.400"/></g>
    <!-- notifications -->
    <path d="M1381.300,770.800 h16.600 v13.200 h-4.500 v4 l-4,-4 h-8.100z" fill="#0c0c0c"/>
    <path d="M1384,774 h11.200 M1384,776.800 h11.200 M1384,779.600 h7" stroke="#8a8a8a" stroke-width="1.200"/>
    <circle cx="1397.300" cy="787" r="7.900" fill="#dedede" stroke="#a5a5a5" stroke-width="1"/>
    <text x="1397.300" y="791.200" font-size="11.500" font-weight="bold" font-family="'Liberation Sans',sans-serif" fill="#3c3c3c" text-anchor="middle">4</text>
    <path d="M1419.700,758 v42" stroke="#c4c4c4" stroke-width="1.200"/>
    <text x="1270" y="784.800" font-size="12.300" font-family="'Liberation Sans',sans-serif" fill="#2a2a2a" textLength="22" lengthAdjust="spacingAndGlyphs">РУС</text>
    <text x="1334.200" y="773.800" font-size="12" font-family="'Liberation Sans',sans-serif" fill="#333" text-anchor="middle" textLength="27.500" lengthAdjust="spacingAndGlyphs">10:49</text>
    <text x="1334.400" y="792.400" font-size="12" font-family="'Liberation Sans',sans-serif" fill="#333" text-anchor="middle" textLength="55.600" lengthAdjust="spacingAndGlyphs">04.07.2025</text>
  </svg>
</div>
</body>
</html>
